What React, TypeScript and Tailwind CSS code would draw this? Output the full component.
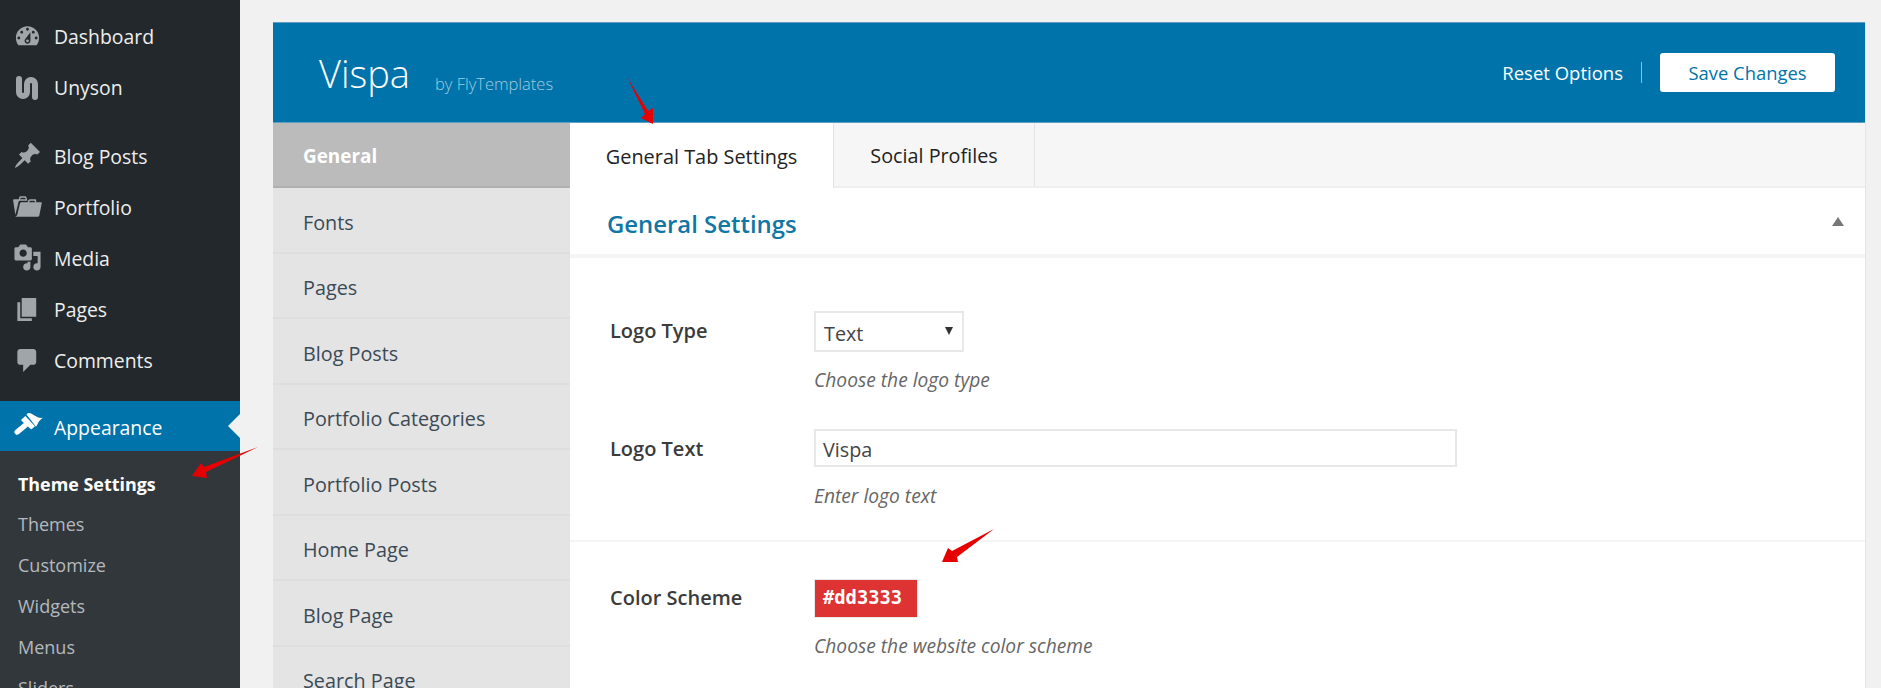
import React from 'react';

const font = 'font-["Open_Sans",sans-serif]';

const icons: Record<string, string> = {
  dashboard:
    'M3.76 16h12.48c1.1-1.37 1.76-3.11 1.76-5 0-4.42-3.58-8-8-8s-8 3.58-8 8c0 1.89.66 3.63 1.76 5zM10 4c.55 0 1 .45 1 1s-.45 1-1 1-1-.45-1-1 .45-1 1-1zM6 6c.55 0 1 .45 1 1s-.45 1-1 1-1-.45-1-1 .45-1 1-1zm8 0c.55 0 1 .45 1 1s-.45 1-1 1-1-.45-1-1 .45-1 1-1zm-5.37 5.55L12 7v6c0 1.1-.9 2-2 2s-2-.9-2-2c0-.57.24-1.08.63-1.45zM4 10c.55 0 1 .45 1 1s-.45 1-1 1-1-.45-1-1 .45-1 1-1zm12 0c.55 0 1 .45 1 1s-.45 1-1 1-1-.45-1-1 .45-1 1-1zm-5 3c0-.55-.45-1-1-1s-1 .45-1 1 .45 1 1 1 1-.45 1-1z',
  pin: 'M10.44 3.02l1.82-1.82 6.36 6.35-1.83 1.82c-1.05-.68-2.48-.57-3.41.36l-.75.75c-.92.93-1.04 2.35-.35 3.41l-1.83 1.82-2.41-2.41-2.8 2.79c-.42.42-3.38 2.71-3.8 2.29s1.86-3.39 2.28-3.81l2.79-2.79L4.1 9.36l1.83-1.82c1.05.69 2.48.57 3.4-.36l.75-.75c.93-.92 1.05-2.35.36-3.41z',
  portfolio:
    'M4 5H.78c-.37 0-.74.32-.69.84l1.56 9.99S3.5 8.47 3.86 6.7c.11-.53.61-.7.98-.7H10s-.7-2.08-.77-2.31C9.11 3.25 8.89 3 8.45 3H5.14c-.36 0-.7.23-.8.64C4.25 4.04 4 5 4 5zm4.88 0h-4s.42-1 .87-1h2.13c.48 0 1 1 1 1zM2.67 16.25c-.31.47-.76.75-1.26.75h15.73c.54 0 .92-.31 1.03-.83.44-2.19 1.68-8.44 1.68-8.44.07-.5-.3-.73-.62-.73H16V5.53c0-.16-.26-.53-.66-.53h-3.76c-.52 0-.87.58-.87.58L10 7H5.59c-.32 0-.63.19-.69.5 0 0-1.59 6.7-1.72 7.33-.07.37-.22.99-.51 1.42zM15.38 7H11s.58-1 1.13-1h2.29c.71 0 .96 1 .96 1z',
  media:
    'M13 11V4c0-.55-.45-1-1-1h-1.67L9 1H5L3.67 3H2c-.55 0-1 .45-1 1v7c0 .55.45 1 1 1h10c.55 0 1-.45 1-1zM7 4.5c1.38 0 2.5 1.12 2.5 2.5S8.38 9.5 7 9.5 4.5 8.38 4.5 7 5.62 4.5 7 4.5zM14 6h5v10.5c0 1.38-1.12 2.5-2.5 2.5S14 17.88 14 16.5s1.12-2.5 2.5-2.5c.17 0 .34.02.5.05V9h-3V6zm-4 8.05V13h2v3.5c0 1.38-1.12 2.5-2.5 2.5S7 17.88 7 16.5 8.12 14 9.5 14c.17 0 .34.02.5.05z',
  pages: 'M6 15V2h10v13H6zm-1 1h8v2H3V5h2v11z',
  comments:
    'M5 2h9c1.1 0 2 .9 2 2v7c0 1.1-.9 2-2 2h-2l-5 5v-5H5c-1.1 0-2-.9-2-2V4c0-1.1.9-2 2-2z',
};

const MenuIcon = ({ name }: { name: string }) => (
  <svg viewBox="0 0 20 20" className="h-[29px] w-[29px] shrink-0 fill-current">
    <path fillRule="evenodd" d={icons[name]} />
  </svg>
);

const UnysonIcon = () => (
  <svg viewBox="0 0 24 24" className="h-[24px] w-[24px] shrink-0 fill-none stroke-current">
    <path d="M4 3V16a4 4 0 0 0 8 0V8a4 4 0 0 1 8 0V21" strokeWidth="6" strokeLinecap="round" />
  </svg>
);

const BrushIcon = () => (
  <svg viewBox="0 0 30 29" className="h-[29px] w-[30px] shrink-0 fill-current">
    {/* bristles */}
    <path d="M13.500 3.500L15 2c2.500-.5 4 .8 6 2.200 2.800 1.800 5.500 3 8.800 2.600-2 1.800-3.800 3.200-4.600 5-.7 1.500-1.200 2.500-2.200 4z" />
    {/* ferrule */}
    <path d="M12.300 5l9.700 10.200-2.800 2.600c-.5.5-1.300.5-1.800 0L8.700 10c-.5-.5-.5-1.300 0-1.800z" />
    {/* handle */}
    <path d="M12 14.500L4.200 21" className="fill-none stroke-current" strokeWidth="5.500" strokeLinecap="round" />
  </svg>
);

const topItems = [
  { label: 'Blog Posts', icon: 'pin' },
  { label: 'Portfolio', icon: 'portfolio' },
  { label: 'Media', icon: 'media' },
  { label: 'Pages', icon: 'pages' },
  { label: 'Comments', icon: 'comments' },
];

const subItems = ['Themes', 'Customize', 'Widgets', 'Menus', 'Sliders'];

const optionMenu = [
  'Fonts',
  'Pages',
  'Blog Posts',
  'Portfolio Categories',
  'Portfolio Posts',
  'Home Page',
  'Blog Page',
  'Search Page',
];

const Sidebar = () => (
  <div className="h-full w-[240px] shrink-0 overflow-hidden bg-[#23282d]">
    <div className="pt-[10px]">
      <div className="flex h-[52px] items-center gap-[12px] pl-[13px] text-[#eee]">
        <span className="text-[#a0a5aa]">
          <MenuIcon name="dashboard" />
        </span>
        <span className="pt-[2px] text-[19.4px]">Dashboard</span>
      </div>
      <div className="flex h-[52px] items-center gap-[15px] pl-[15px] text-[#eee]">
        <span className="text-[#a0a5aa]">
          <UnysonIcon />
        </span>
        <span className="text-[19.4px]">Unyson</span>
      </div>
    </div>
    <div className="pt-[16px]">
      {topItems.map((item) => (
        <div key={item.label} className="flex h-[51.2px] items-center gap-[12px] pl-[13px] text-[#eee]">
          <span className="text-[#a0a5aa]">
            <MenuIcon name={item.icon} />
          </span>
          <span className="pt-[1px] text-[19.4px]">{item.label}</span>
        </div>
      ))}
    </div>
    <div className="relative mt-[15px] flex h-[50px] items-center gap-[11px] bg-[#0073aa] pl-[13px] text-white">
      <BrushIcon />
      <span className="pt-[4px] text-[19.4px]">Appearance</span>
      <div className="absolute top-[13px] right-0 h-0 w-0 border-y-[12px] border-r-[12px] border-y-transparent border-r-[#f1f1f1]" />
    </div>
    <div className="bg-[#32373c] pt-[12px] pb-[20px]">
      <div className="flex h-[41px] items-center pt-[2px] pl-[18px] text-[17.9px] font-bold text-white">
        Theme Settings
      </div>
      {subItems.map((item) => (
        <div key={item} className="flex h-[41px] items-center pl-[18px] text-[18px] text-[#b4b9be]">
          {item}
        </div>
      ))}
    </div>
  </div>
);

const FieldRow = ({
  label,
  desc,
  labelPad,
  descGap,
  children,
}: {
  label: string;
  desc: string;
  labelPad: string;
  descGap: string;
  children: React.ReactNode;
}) => (
  <div className="flex">
    <div className={`w-[204px] shrink-0 text-[20px] leading-[28px] font-semibold text-[#3b3b3b] ${labelPad}`}>
      {label}
    </div>
    <div>
      {children}
      <p className={`text-[19.2px] leading-[26px] text-[#666] italic ${descGap}`}>{desc}</p>
    </div>
  </div>
);

const Main = () => (
  <div className="min-w-0 flex-1 pt-[22px] pr-[15px] pl-[33px]">
    <div className="overflow-hidden border-r border-[#e5e5e5] bg-white">
      <div className="flex h-[101px] items-center border-y border-[#5c9fc2] bg-[#0073aa] pr-[30px] pl-[46px]">
        <span className="mt-[2px] text-[38px] font-light text-white">Vispa</span>
        <span className="mt-[24px] ml-[25px] text-[16.5px] font-light text-[#9fcbe0]">by FlyTemplates</span>
        <span className="ml-auto text-[18.5px] text-white">Reset Options</span>
        <span className="mx-[18px] h-[21px] w-px bg-[#8fc0d8]" />
        <button className="h-[39px] w-[175px] rounded-[3px] bg-white text-[18.4px] text-[#0073aa]">Save Changes</button>
      </div>
      <div className="flex h-[566px]">
        <div className="w-[297px] shrink-0 bg-[#e4e4e4]">
          <div className="flex h-[65px] items-center border-b-2 border-[#b0b0b0] bg-[#bbbbbb] pt-[4px] pl-[30px] text-[18.9px] font-bold text-white">
            General
          </div>
          {optionMenu.map((item) => (
            <div
              key={item}
              className="flex h-[65.5px] items-center border-b-2 border-[#dedede] pt-[6px] pl-[30px] text-[19.8px] text-[#3b4a55]"
            >
              {item}
            </div>
          ))}
        </div>
        <div className="min-w-0 flex-1">
          <div className="flex h-[65px] border-b-2 border-[#eeeeee] bg-[#f6f6f6]">
            <div className="mb-[-2px] flex w-[264px] items-center justify-center border-r border-[#e4e4e4] bg-white pt-[2px] text-[19.9px] text-[#222]">
              General Tab Settings
            </div>
            <div className="flex w-[201px] items-center justify-center border-r border-[#e4e4e4] pt-[2px] text-[19.8px] text-[#222]">
              Social Profiles
            </div>
          </div>
          <div className="flex h-[70px] items-center justify-between border-b-4 border-[#f5f5f5] pr-[21px] pl-[37px]">
            <h2 className="pt-[6px] text-[23.9px] font-semibold text-[#0f76a5]">General Settings</h2>
            <div className="h-0 w-0 border-x-[6px] border-b-[9px] border-x-transparent border-b-[#777]" />
          </div>
          <div className="border-b-2 border-[#f5f5f5] pt-[53px] pb-[31px] pl-[40px]">
            <FieldRow label="Logo Type" desc="Choose the logo type" labelPad="pt-[6px]" descGap="mt-[15px]">
              <div className="flex h-[41px] w-[150px] items-center justify-between border-2 border-[#e8e8e8] pt-[4px] pr-[9px] pl-[8px] text-[19.8px] text-[#444]">
                Text
                <span className="mt-[-6px] h-0 w-0 border-x-[4px] border-t-[8px] border-x-transparent border-t-[#333]" />
              </div>
            </FieldRow>
            <div className="h-[36px]" />
            <FieldRow label="Logo Text" desc="Enter logo text" labelPad="pt-[6px]" descGap="mt-[16px]">
              <div className="flex h-[38px] w-[643px] items-center border-2 border-[#e8e8e8] pt-[4px] pl-[7px] text-[19.8px] text-[#444]">
                Vispa
              </div>
            </FieldRow>
          </div>
          <div className="pt-[37px] pl-[40px]">
            <FieldRow label="Color Scheme" desc="Choose the website color scheme" labelPad="pt-[5px]" descGap="mt-[15px]">
              <div className="flex h-[39px] w-[104px] items-center border border-[#e8e8e8] bg-[#dd3333] pl-[8px] font-['DejaVu_Sans_Mono',monospace] text-[18.8px] font-bold text-white">
                #dd3333
              </div>
            </FieldRow>
          </div>
        </div>
      </div>
    </div>
  </div>
);

export default function App() {
  return (
    <div className={`relative flex h-[688px] w-[1881px] overflow-hidden bg-[#f1f1f1] ${font}`}>
      <Sidebar />
      <Main />
      {/* red arrows drawn on top of the screenshot */}
      <svg className="absolute top-0 left-0 h-[688px] w-[1881px]" viewBox="0 0 1881 688">
        <polygon fill="#e60000" points="627,77 648,111 653,108 653,124 641,118 645,114" />
        <polygon fill="#e60000" points="258,447 206,472 207,478 192,476 201,463 204,467" />
        <polygon fill="#e60000" points="994,529 957,557 958,562 942,562 948,548 952,551" />
      </svg>
    </div>
  );
}
